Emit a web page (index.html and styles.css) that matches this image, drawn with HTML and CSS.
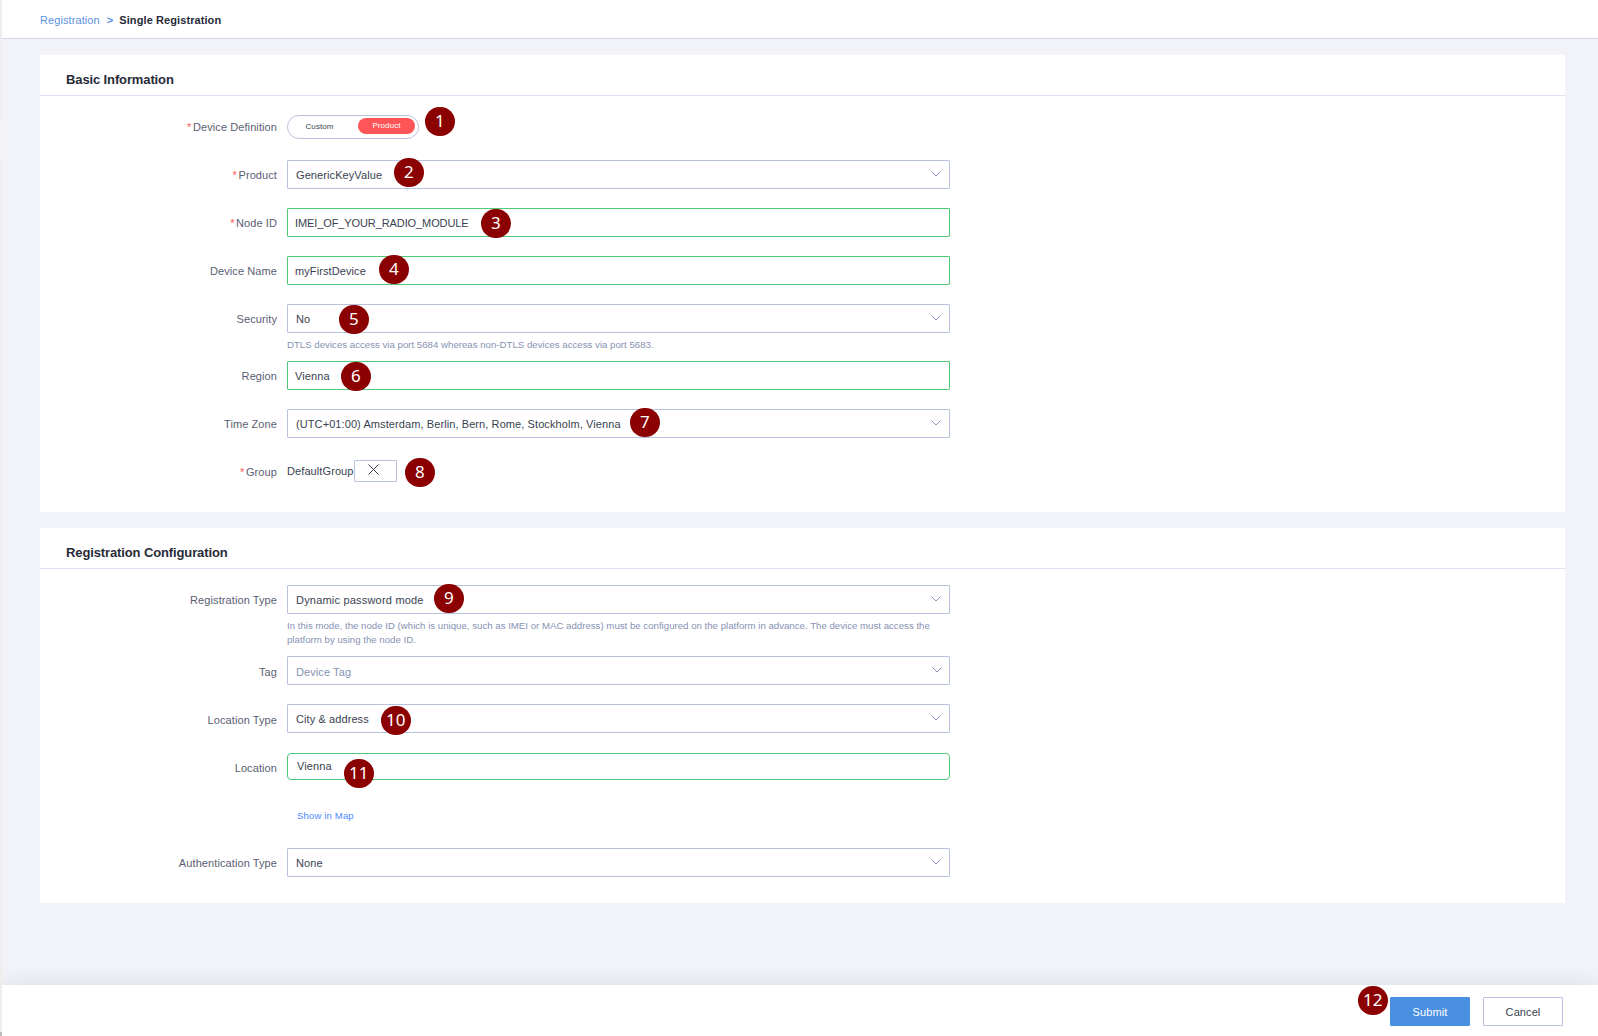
FILE: index.html
```html
<!DOCTYPE html>
<html lang="en">
<head>
<meta charset="utf-8">
<title>Single Registration</title>
<link rel="stylesheet" href="styles.css">
</head>
<body>
<svg class="defs" width="0" height="0">
  <symbol id="chevron" viewBox="0 0 10 6"><path d="M.5 .5 5 5 9.500 .5" fill="none" stroke="currentColor"/></symbol>
  <symbol id="close" viewBox="0 0 11 11"><path d="M.5 .5 10.500 10.500M10.500 .5 .5 10.500" fill="none" stroke="currentColor"/></symbol>
</svg>
<div class="page">
  <nav class="breadcrumb"><a class="crumb">Registration</a><span class="sep">&gt;</span><strong>Single Registration</strong></nav>
  <main class="content">
    <section class="card basic">
      <h2>Basic Information</h2>
      <div class="rows">
        <div class="row"><label><i>*</i>Device Definition</label><div class="toggle"><span>Custom</span><span class="on">Product</span></div></div>
        <div class="row"><label><i>*</i>Product</label><div class="field">GenericKeyValue<svg class="chev"><use href="#chevron"/></svg></div></div>
        <div class="row"><label><i>*</i>Node ID</label><div class="field valid caps">IMEI_OF_YOUR_RADIO_MODULE</div></div>
        <div class="row"><label>Device Name</label><div class="field valid">myFirstDevice</div></div>
        <div class="row hinted"><label>Security</label><div class="field">No<svg class="chev"><use href="#chevron"/></svg></div><p class="hint">DTLS devices access via port 5684 whereas non-DTLS devices access via port 5683.</p></div>
        <div class="row"><label>Region</label><div class="field valid">Vienna</div></div>
        <div class="row"><label>Time Zone</label><div class="field">(UTC+01:00) Amsterdam, Berlin, Bern, Rome, Stockholm, Vienna<svg class="chev"><use href="#chevron"/></svg></div></div>
        <div class="row"><label><i>*</i>Group</label><div class="group"><span>DefaultGroup</span><button class="remove"><svg><use href="#close"/></svg></button></div></div>
      </div>
    </section>
    <section class="card config">
      <h2>Registration Configuration</h2>
      <div class="rows">
        <div class="row hinted long"><label>Registration Type</label><div class="field wide">Dynamic password mode<svg class="chev"><use href="#chevron"/></svg></div><p class="hint">In this mode, the node ID (which is unique, such as IMEI or MAC address) must be configured on the platform in advance. The device must access the<br>platform by using the node ID.</p></div>
        <div class="row lower"><label>Tag</label><div class="field placeholder">Device Tag<svg class="chev"><use href="#chevron"/></svg></div></div>
        <div class="row lower"><label>Location Type</label><div class="field raised">City &amp; address<svg class="chev"><use href="#chevron"/></svg></div></div>
        <div class="row lower"><label>Location</label><div class="field valid rounded">Vienna</div></div>
        <div class="row map"><a>Show in Map</a></div>
        <div class="row"><label>Authentication Type</label><div class="field">None<svg class="chev"><use href="#chevron"/></svg></div></div>
      </div>
    </section>
  </main>
  <footer class="actions"><button class="btn primary">Submit</button><button class="btn">Cancel</button></footer>
  <span class="badge b1">1</span><span class="badge b2">2</span><span class="badge b3">3</span><span class="badge b4">4</span>
  <span class="badge b5">5</span><span class="badge b6">6</span><span class="badge b7">7</span><span class="badge b8">8</span>
  <span class="badge b9">9</span><span class="badge b10">10</span><span class="badge b11">11</span><span class="badge b12">12</span>
</div>
</body>
</html>
```
FILE: styles.css
```css
* { box-sizing: border-box; }
body { margin: 0; padding-left: 2px; background: linear-gradient(#eee 120px, #f4f4f4 120px, #f4f4f4 160px, #eee 160px, #eee 1032px, #bbb 1032px); font-family: "Liberation Sans", Arial, sans-serif; font-size: 11px; letter-spacing: .09px; color: #393f4f; }
.defs { position: absolute; }
button { font: inherit; letter-spacing: inherit; color: inherit; padding: 0; }
.page { position: relative; height: 1036px; display: flex; flex-direction: column; background: #f2f3f9; overflow: hidden; }

.breadcrumb { height: 39px; flex: none; display: flex; align-items: center; padding: 1px 0 0 38px; background: #fff; border-bottom: 1px solid #d0d6e9; }
.crumb, .sep { color: #5a91e0; }
.sep { margin: 0 6px 0 7px; font-weight: bold; }
.breadcrumb strong { color: #272b38; }

.content { flex: 1; padding: 16px 33px 0 38px; display: flex; flex-direction: column; gap: 16px; }
.card { background: #fff; }
.basic { height: 457px; }
.config { height: 375px; }
.card h2 { margin: 0; height: 41px; padding: 9px 26px 0; line-height: 32px; font-size: 13px; letter-spacing: -.12px; color: #272b38; border-bottom: 1px solid #dfe3f1; }
.rows { padding-top: 16px; }

.row { display: grid; grid-template-columns: 237px 663px; column-gap: 10px; grid-template-rows: 29px; height: 48px; align-items: start; }
.row label { text-align: right; line-height: 31px; color: #5a6072; }
.row label i { font-style: normal; color: #f55; margin-right: 1.5px; }
.lower label { padding-top: 1px; }
.field { height: 29px; display: flex; align-items: center; justify-content: space-between; padding: 0 8px; border: 1px solid #b9c3de; border-radius: 1px; white-space: nowrap; }
.valid { border-color: #50c878; padding-left: 7px; }
.caps { letter-spacing: -.1px; }
.wide { letter-spacing: .2px; }
.placeholder { color: #8792b3; padding: 2px 7px 0 8px; }
.rounded { height: 27px; margin-top: 1px; border-radius: 4px; padding: 0 9px 1px; }
.chev { width: 10px; height: 6px; color: #8490b4; margin-top: -2px; }
.placeholder .chev { margin-top: -4px; }
.hinted { height: 57px; }
.long { height: 71px; }
.hint { grid-column: 2; margin: 5px 0 0; font-size: 9.66px; line-height: 14px; letter-spacing: 0; color: #8792b3; white-space: nowrap; }
.map a { grid-column: 2; padding-left: 10px; line-height: 31px; font-size: 9.66px; color: #4d8bff; }
.toggle { width: 132px; height: 24px; margin-top: 3px; display: flex; align-items: center; padding: 0 3px 2px 17.5px; justify-content: space-between; border: 1px solid #b9c3de; border-radius: 12px; font-size: 8px; }
.toggle .on { width: 57px; height: 16px; line-height: 16px; text-align: center; border-radius: 8px; color: #fff; background: #ff5558; }
.group { display: flex; align-items: flex-start; line-height: 29px; }
.remove { width: 43px; height: 22px; margin-top: 3px; display: flex; justify-content: center; padding: 3px 4px 0 0; background: #fff; border: 1px solid #b9c3de; border-radius: 1px; }
.remove svg { width: 11px; height: 11px; }

.actions { position: relative; height: 51px; flex: none; display: flex; justify-content: flex-end; align-items: flex-start; gap: 13px; padding: 12px 35px 0 0; background: #fff; box-shadow: 0 0 20px rgba(80, 80, 100, .14); }
.btn { width: 80px; height: 29px; background: #fff; border: 1px solid #b9c3de; border-radius: 1px; }
.primary { background: #4a90e2; border-color: #4a90e2; color: #fff; }

/* Numbered step markers over the form */
.badge { position: absolute; width: 29.6px; height: 29.6px; border-radius: 50%; background: #8b0000; color: #fff; font: 17px/28px "Noto Sans", sans-serif; letter-spacing: 0; text-align: center; }
.b1 { left: 423px; top: 106.800px; }
.b2 { left: 392px; top: 157.800px; }
.b3 { left: 479px; top: 208.800px; }
.b4 { left: 377px; top: 254.800px; }
.b5 { left: 337px; top: 304.800px; }
.b6 { left: 339px; top: 361.800px; }
.b7 { left: 628px; top: 407.800px; }
.b8 { left: 403px; top: 457.800px; }
.b9 { left: 432px; top: 583.800px; }
.b10 { left: 379px; top: 705.800px; }
.b11 { left: 342px; top: 758.800px; }
.b12 { left: 1356px; top: 985.800px; }
```
